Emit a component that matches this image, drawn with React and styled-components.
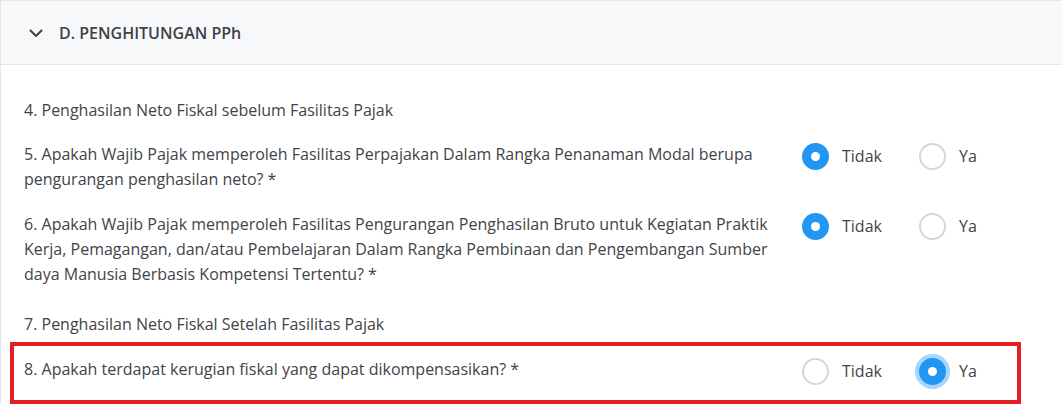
import React, { useState } from 'react'
import styled, { createGlobalStyle } from 'styled-components';

const GlobalStyle = createGlobalStyle`
  body {
    margin: 0;
    background: #ffffff;
    font-family: "Open Sans", "Noto Sans", Arial, sans-serif;
    color: #3f4449;
    overflow: hidden;
  }
`;

const Card = styled.div`
  width: 1100px;
  border-top: 1px solid #e3e6ea;
  border-left: 1px solid #e3e6ea;
  background: #fff;
`;

const Header = styled.div`
  display: flex;
  align-items: center;
  gap: 15px;
  height: 63px;
  padding-left: 27px;
  background: #f7f8fa;
  border-bottom: 1px solid #e3e6ea;
`;

const HeaderTitle = styled.h3`
  margin: 0;
  font-size: 16px;
  font-weight: 600;
  color: #3d4146;
`;

const Body = styled.div`
  display: flex;
  flex-direction: column;
  padding: 33px 0 0 23px;
`;

const Row = styled.div`
  display: flex;
  align-items: flex-start;
  margin-top: ${({ $space }) => $space}px;
`;

const Question = styled.div`
  flex: 0 0 774px;
  font-size: 16px;
  line-height: 25px;
`;

const Options = styled.div`
  display: flex;
  margin-left: 4px;
  padding-top: 1px;
`;

const Option = styled.label`
  display: flex;
  align-items: center;
  gap: 13px;
  min-width: 117px;
  font-size: 16px;
  line-height: 27px;
  cursor: pointer;
`;

const Radio = styled.span`
  box-sizing: border-box;
  width: 27px;
  height: 27px;
  border-radius: 50%;
  flex-shrink: 0;
  display: flex;
  align-items: center;
  justify-content: center;
  border: ${({ $checked }) => ($checked ? 'none' : '2px solid #d3d6da')};
  background: ${({ $checked }) => ($checked ? '#2196f3' : '#fff')};
  box-shadow: ${({ $focus }) => ($focus ? '0 0 0 4px #a9d5fb' : 'none')};

  &::after {
    content: '';
    display: ${({ $checked }) => ($checked ? 'block' : 'none')};
    width: 9px;
    height: 9px;
    border-radius: 50%;
    background: #fff;
  }
`;

const Highlight = styled.div`
  box-sizing: border-box;
  width: 1011px;
  margin: 5px 0 0 -14px;
  padding: 11px 0 15px 10px;
  border: 4px solid #e31e25;
`;

const Chevron = () => (
  <svg width="16" height="16" viewBox="0 0 16 16" fill="none">
    <path d="M2.5 5.5 L8 11 L13.5 5.5" stroke="#3d4146" strokeWidth="2" strokeLinecap="round" strokeLinejoin="round" />
  </svg>
);

const Choice = ({ value, onChange, focusYes }) => (
  <Options>
    <Option onClick={() => onChange('tidak')}>
      <Radio $checked={value === 'tidak'} />
      Tidak
    </Option>
    <Option onClick={() => onChange('ya')}>
      <Radio $checked={value === 'ya'} $focus={focusYes && value === 'ya'} />
      Ya
    </Option>
  </Options>
);

const App = () => {
  const [q5, setQ5] = useState('tidak');
  const [q6, setQ6] = useState('tidak');
  const [q8, setQ8] = useState('ya');

  return (
    <>
      <GlobalStyle />
      <Card>
        <Header>
          <Chevron />
          <HeaderTitle>D. PENGHITUNGAN PPh</HeaderTitle>
        </Header>
        <Body>
          <Row $space={0}>
            <Question>4. Penghasilan Neto Fiskal sebelum Fasilitas Pajak</Question>
          </Row>
          <Row $space={19}>
            <Question>
              5. Apakah Wajib Pajak memperoleh Fasilitas Perpajakan Dalam Rangka Penanaman Modal berupa pengurangan penghasilan neto? *
            </Question>
            <Choice value={q5} onChange={setQ5} />
          </Row>
          <Row $space={20}>
            <Question>
              6. Apakah Wajib Pajak memperoleh Fasilitas Pengurangan Penghasilan Bruto untuk Kegiatan Praktik Kerja, Pemagangan, dan/atau Pembelajaran Dalam Rangka Pembinaan dan Pengembangan Sumber daya Manusia Berbasis Kompetensi Tertentu? *
            </Question>
            <Choice value={q6} onChange={setQ6} />
          </Row>
          <Row $space={25}>
            <Question>7. Penghasilan Neto Fiskal Setelah Fasilitas Pajak</Question>
          </Row>
          <Highlight>
            <Row $space={0}>
              <Question>8. Apakah terdapat kerugian fiskal yang dapat dikompensasikan? *</Question>
              <Choice value={q8} onChange={setQ8} focusYes />
            </Row>
          </Highlight>
        </Body>
      </Card>
    </>
  );
};

export default App;
